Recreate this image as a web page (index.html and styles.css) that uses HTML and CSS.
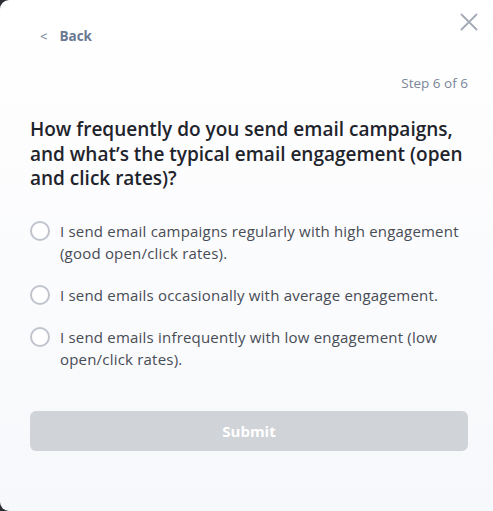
FILE: index.html
```html
<!DOCTYPE html>
<html lang="en">
<head>
<meta charset="utf-8">
<link rel="stylesheet" href="styles.css">
</head>
<body>
<div class="card">
  <button class="close" aria-label="Close">
    <svg width="18" height="18" viewBox="0 0 18 18"><path d="M1.5 1.5L16.5 16.5M16.5 1.5L1.5 16.5" stroke="#a3aab5" stroke-width="1.8" stroke-linecap="round" fill="none"/></svg>
  </button>
  <div class="back"><span class="chev">&lt;</span><span>Back</span></div>
  <div class="step">Step 6 of 6</div>
  <h1 class="question">How frequently do you send email campaigns, and what’s the typical email engagement (open and click rates)?</h1>
  <ul class="options">
    <li class="option"><span class="radio"></span><span class="label">I send email campaigns regularly with high engagement (good open/click rates).</span></li>
    <li class="option"><span class="radio"></span><span class="label">I send emails occasionally with average engagement.</span></li>
    <li class="option"><span class="radio"></span><span class="label">I send emails infrequently with low engagement (low open/click rates).</span></li>
  </ul>
  <button class="submit">Submit</button>
</div>
</body>
</html>
```
FILE: styles.css
```css
html, body {
  margin: 0;
  padding: 0;
  height: 100%;
}
body {
  background: #2a2d33;
  font-family: "Open Sans", "Lato", sans-serif;
}
.card {
  position: relative;
  box-sizing: border-box;
  width: 100%;
  height: 511px;
  border-radius: 9px 0 0 9px;
  background: linear-gradient(to bottom, #ffffff 0%, #f7f8fb 100%);
  padding: 26px 25px 0 30px;
}
.close {
  position: absolute;
  left: 460px;
  top: 13px;
  width: 18px;
  height: 18px;
  padding: 0;
  border: 0;
  background: none;
  display: block;
}
.back {
  display: flex;
  align-items: center;
  gap: 12px;
  padding-left: 10px;
  height: 20px;
  font-size: 13.5px;
  font-weight: 700;
  color: #6b7891;
}
.chev {
  font-weight: 400;
  font-size: 13px;
}
.step {
  width: 438px;
  text-align: right;
  margin-top: 27px;
  font-size: 13.5px;
  line-height: 20px;
  color: #7a8599;
}
.question {
  width: 438px;
  margin: 24px 0 0;
  font-size: 19px;
  line-height: 24.5px;
  font-weight: 600;
  color: #1f242c;
}
.options {
  list-style: none;
  margin: 30px 0 0;
  padding: 0;
  width: 438px;
  display: flex;
  flex-direction: column;
  gap: 21px;
}
.option {
  display: flex;
  align-items: flex-start;
  gap: 10px;
}
.radio {
  flex: none;
  box-sizing: border-box;
  width: 20px;
  height: 20px;
  border: 2px solid #bfc4cc;
  border-radius: 50%;
  background: #fff;
}
.label {
  font-size: 15px;
  letter-spacing: 0.2px;
  line-height: 22px;
  color: #474c55;
  margin-top: -1px;
}
.submit {
  display: block;
  margin-top: 41px;
  width: 438px;
  height: 40px;
  border: 0;
  border-radius: 6px;
  background: #d0d3d8;
  color: #ffffff;
  font-family: inherit;
  font-size: 15px;
  font-weight: 700;
}
```
